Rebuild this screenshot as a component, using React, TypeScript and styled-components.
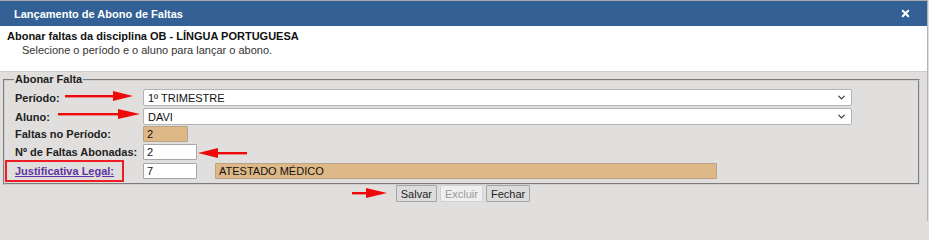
import React from 'react';
import styled, { createGlobalStyle } from 'styled-components';
import { ChevronDown, X } from 'lucide-react';

const GlobalStyle = createGlobalStyle`
	html, body {
		margin: 0;
		padding: 0;
		background: #e0dfdd;
	}
	body {
		font-family: 'Liberation Sans', Arial, sans-serif;
		font-size: 11px;
		color: #1e1e1e;
	}
`;

const Dialog = styled.div`
	width: 928px;
	height: 221px;
	overflow: hidden;
	border-top: 1px solid #a9a9a9;
	border-right: 1px solid #b4b4b4;
	background: #e0dfdd;
	box-sizing: border-box;
`;

const TitleBar = styled.div`
	display: flex;
	align-items: center;
	justify-content: space-between;
	height: 25px;
	padding: 0 16px 0 14px;
	background: #336195;
	color: #ffffff;
	font-weight: bold;
	font-size: 11px;
`;

const CloseButton = styled.span`
	display: flex;
	align-items: center;
	color: #ffffff;
`;

const Header = styled.div`
	height: 46px;
	box-sizing: border-box;
	padding: 3px 7px 0 7px;
	background: #ffffff;
	border-bottom: 1px solid #cfcfcf;
	line-height: 14px;
`;

const HeaderTitle = styled.div`
	font-weight: bold;
	color: #111;
`;

const HeaderHint = styled.div`
	padding-left: 15px;
	color: #333;
`;

const Content = styled.div`
	padding: 1px 7px 0 3px;
`;

const Fieldset = styled.fieldset`
	margin: 0;
	padding: 1px 10px 4px 10px;
	border: 2px groove #d0d0d0;
	min-width: 0;
`;

const Legend = styled.legend`
	padding: 0 1px;
	margin-left: -1px;
	font-weight: bold;
	line-height: 13px;
	color: #222;
`;

const FormArea = styled.div`
	position: relative;
	padding-top: 1px;
`;

const FormGrid = styled.div`
	display: grid;
	grid-template-columns: 128px 1fr;
	grid-template-rows: 19px 19px 16px 20px 17px;
	align-items: center;
`;

const Label = styled.div`
	font-weight: bold;
	color: #222;
	white-space: nowrap;
`;

const LinkLabel = styled.a`
	position: relative;
	font-weight: bold;
	color: #5e34a3;
	text-decoration: underline;
	white-space: nowrap;

	&::after {
		content: '';
		position: absolute;
		left: -10px;
		right: -10px;
		top: -5px;
		bottom: -5px;
		border: 2px solid #ee1c24;
	}
`;

const Field = styled.div`
	display: flex;
	align-items: center;
	gap: 18px;
`;

const SelectWrap = styled.div`
	position: relative;
	width: 709px;
	height: 17px;
`;

const Select = styled.div`
	height: 17px;
	box-sizing: border-box;
	padding: 0 4px;
	display: flex;
	align-items: center;
	background: #ffffff;
	border: 1px solid #b3b3b3;
	border-radius: 2px;
	color: #111;
`;

const Chevron = styled.span`
	position: absolute;
	right: 5px;
	top: 3px;
	display: flex;
	color: #333;
`;

const TextBox = styled.div<{ $w: number; $tan?: boolean }>`
	width: ${({ $w }) => $w}px;
	height: 16px;
	box-sizing: border-box;
	padding: 0 3px;
	display: flex;
	align-items: center;
	background: ${({ $tan }) => ($tan ? '#deb887' : '#ffffff')};
	border: 1px solid ${({ $tan }) => ($tan ? '#b9a386' : '#a6a6a6')};
	border-radius: 1px;
	color: #111;
`;

const ButtonArea = styled.div`
	position: relative;
`;

const ButtonRow = styled.div`
	display: flex;
	justify-content: center;
	gap: 3px;
	padding-left: 3px;
`;

const Button = styled.button<{ $disabled?: boolean }>`
	height: 17px;
	padding: 0 4px;
	font-family: 'Liberation Sans', Arial, sans-serif;
	font-size: 11px;
	color: ${({ $disabled }) => ($disabled ? '#9a9a9a' : '#1e1e1e')};
	background: ${({ $disabled }) => ($disabled ? '#efefef' : '#dcdcdc')};
	border: 1px solid ${({ $disabled }) => ($disabled ? '#d2d2d2' : '#a4a4a4')};
	border-radius: 1px;
`;

const ArrowMark = styled.svg<{ $x: number; $y: number }>`
	position: absolute;
	left: ${({ $x }) => $x}px;
	top: ${({ $y }) => $y}px;
	overflow: visible;
`;

function Arrow({ x, y, len, head = 20, left = false }: { x: number; y: number; len: number; head?: number; left?: boolean }) {
	const shaft = len - head;
	return (
		<ArrowMark $x={x} $y={y} width={len} height={12} viewBox={`0 0 ${len} 12`}>
			{left ? (
				<>
					<polygon points={`0,6 ${head},1 ${head},11`} fill="#ee0a0a" />
					<rect x={head - 1} y={5} width={shaft + 1} height={2.4} fill="#ee0a0a" />
				</>
			) : (
				<>
					<rect x={0} y={5} width={shaft + 1} height={2.4} fill="#ee0a0a" />
					<polygon points={`${shaft},1 ${len},6 ${shaft},11`} fill="#ee0a0a" />
				</>
			)}
		</ArrowMark>
	);
}

export default function App() {
	return (
		<>
			<GlobalStyle />
			<Dialog>
				<TitleBar>
					<span>Lançamento de Abono de Faltas</span>
					<CloseButton>
						<X size={11} strokeWidth={4.5} />
					</CloseButton>
				</TitleBar>
				<Header>
					<HeaderTitle>Abonar faltas da disciplina OB - LÍNGUA PORTUGUESA</HeaderTitle>
					<HeaderHint>Selecione o período e o aluno para lançar o abono.</HeaderHint>
				</Header>
				<Content>
					<Fieldset>
						<Legend>Abonar Falta</Legend>
						<FormArea>
							<FormGrid>
								<Label>Período:</Label>
								<Field>
									<SelectWrap>
										<Select>1º TRIMESTRE</Select>
										<Chevron>
											<ChevronDown size={11} strokeWidth={2.5} />
										</Chevron>
									</SelectWrap>
								</Field>

								<Label>Aluno:</Label>
								<Field>
									<SelectWrap>
										<Select>DAVI</Select>
										<Chevron>
											<ChevronDown size={11} strokeWidth={2.5} />
										</Chevron>
									</SelectWrap>
								</Field>

								<Label>Faltas no Período:</Label>
								<Field>
									<TextBox $w={45} $tan>2</TextBox>
								</Field>

								<Label>Nº de Faltas Abonadas:</Label>
								<Field>
									<TextBox $w={54}>2</TextBox>
								</Field>

								<Label>
									<LinkLabel>Justificativa Legal:</LinkLabel>
								</Label>
								<Field>
									<TextBox $w={54}>7</TextBox>
									<TextBox $w={502} $tan>ATESTADO MÉDICO</TextBox>
								</Field>
							</FormGrid>
							<Arrow x={50} y={3} len={68} />
							<Arrow x={43} y={21} len={82} head={22} />
							<Arrow x={183} y={60} len={49} left />
						</FormArea>
					</Fieldset>
					<ButtonArea>
						<ButtonRow>
							<Button>Salvar</Button>
							<Button $disabled>Excluir</Button>
							<Button>Fechar</Button>
						</ButtonRow>
						<Arrow x={349} y={2} len={35} head={21} />
					</ButtonArea>
				</Content>
			</Dialog>
		</>
	);
}
